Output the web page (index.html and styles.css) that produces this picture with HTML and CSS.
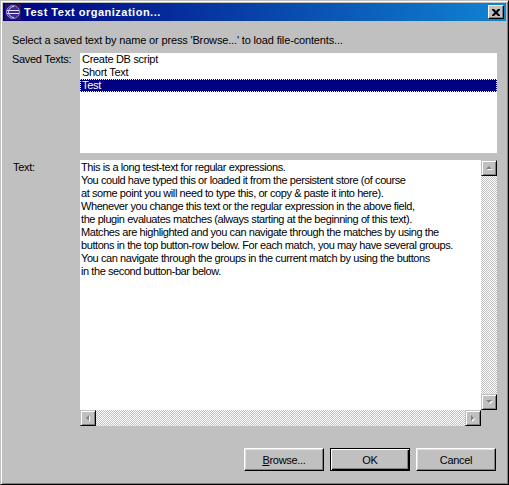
FILE: index.html
```html
<!DOCTYPE html>
<html>
<head>
<meta charset="utf-8">
<link rel="stylesheet" href="styles.css">
</head>
<body>
<div class="window">
  <div class="titlebar">
    <svg class="app-icon" width="16" height="16" viewBox="0 0 16 16">
      <rect x="0" y="0" width="16" height="16" fill="#2a1660"/>
      <circle cx="8" cy="8" r="6.5" fill="#3b2a8a" stroke="#9c8ae0" stroke-width="1"/>
      <rect x="2" y="6" width="12" height="1" fill="#e8e0ff"/>
      <rect x="2" y="9" width="12" height="1" fill="#e8e0ff"/>
      <path d="M9 2.5 A5.5 5.5 0 0 0 9 13.5" fill="none" stroke="#d0c8ff" stroke-width="1"/>
    </svg>
    <span class="title">Test Text organization...</span>
    <button class="close-btn" aria-label="Close">
      <svg width="8" height="7" viewBox="0 0 8 7"><path d="M0 0h2l2 2 2-2h2v1l-2.5 2.5 2.5 2.5v1h-2l-2-2-2 2h-2v-1l2.5-2.5-2.5-2.5z" fill="#000"/></svg>
    </button>
  </div>
  <div class="content">
    <p class="intro">Select a saved text by name or press 'Browse...' to load file-contents...</p>
    <div class="form">
      <label class="label">Saved Texts:</label>
      <ul class="listbox">
        <li>Create DB script</li>
        <li>Short Text</li>
        <li class="selected">Test</li>
      </ul>
      <label class="label label-text">Text:</label>
      <div class="textarea">
        <div class="text-main">
          <div class="text-body">This is a long test-text for regular expressions.
You could have typed this or loaded it from the persistent store (of course
at some point you will need to type this, or copy &amp; paste it into here).
Whenever you change this text or the regular expression in the above field,
the plugin evaluates matches (always starting at the beginning of this text).
Matches are highlighted and you can navigate through the matches by using the
buttons in the top button-row below. For each match, you may have several groups.
You can navigate through the groups in the current match by using the buttons
in the second button-bar below.</div>
          <div class="vscroll">
            <div class="sb-btn">
              <svg width="7" height="5" viewBox="0 0 7 5"><path d="M4 1 L7 4 H1 Z" fill="#fff"/><path d="M3 0 L6 3 H0 Z" fill="#808080"/></svg>
            </div>
            <div class="sb-track"></div>
            <div class="sb-btn">
              <svg width="7" height="5" viewBox="0 0 7 5"><path d="M1 1 H7 L4 4 Z" fill="#fff"/><path d="M0 0 H6 L3 3 Z" fill="#808080"/></svg>
            </div>
          </div>
        </div>
        <div class="hscroll-row">
          <div class="hscroll">
            <div class="sb-btn">
              <svg width="5" height="7" viewBox="0 0 5 7"><path d="M4 1 V7 L1 4 Z" fill="#fff"/><path d="M3 0 V6 L0 3 Z" fill="#808080"/></svg>
            </div>
            <div class="sb-track"></div>
            <div class="sb-btn">
              <svg width="5" height="7" viewBox="0 0 5 7"><path d="M1 1 V7 L4 4 Z" fill="#fff"/><path d="M0 0 V6 L3 3 Z" fill="#808080"/></svg>
            </div>
          </div>
          <div class="sb-corner"></div>
        </div>
      </div>
    </div>
    <div class="buttons">
      <button class="btn"><u>B</u>rowse...</button>
      <button class="btn btn-default">OK</button>
      <button class="btn">Cancel</button>
    </div>
  </div>
</div>
</body>
</html>
```
FILE: styles.css
```css
* { box-sizing: border-box; }
html, body { margin: 0; padding: 0; }
body {
  background: #c0c0c0;
  font-family: "Liberation Sans", Arial, sans-serif;
  font-size: 11px;
  letter-spacing: -0.3px;
  color: #000;
}
.window {
  width: 509px;
  height: 485px;
  background: #c0c0c0;
  border: 1px solid;
  border-color: #c0c0c0 #000 #000 #c0c0c0;
  box-shadow: inset 1px 1px #fff, inset -1px -1px #808080;
  padding: 2px;
  display: flex;
  flex-direction: column;
}
.titlebar {
  height: 18px;
  background: linear-gradient(to right, #000080, #1084d0);
  display: flex;
  align-items: center;
  padding: 0 2px 0 2px;
}
.app-icon { flex: none; margin-right: 3px; }
.title {
  color: #fff;
  font-weight: bold;
  font-size: 11px;
  flex: 1;
  letter-spacing: 0.5px;
}
.close-btn {
  width: 16px;
  height: 14px;
  padding: 0;
  background: #c0c0c0;
  border: 1px solid;
  border-color: #fff #000 #000 #fff;
  box-shadow: inset -1px -1px #808080;
  display: flex;
  align-items: center;
  justify-content: center;
}
.content {
  flex: 1;
  padding: 13px 9px 0 9px;
  display: flex;
  flex-direction: column;
}
.intro {
  margin: 0;
  line-height: 13px;
  height: 13px;
  letter-spacing: -0.15px;
}
.form {
  margin-top: 6px;
  display: grid;
  grid-template-columns: 68px minmax(0, 1fr);
  grid-template-rows: 100px 266px;
  row-gap: 7px;
}
.label {
  line-height: 13px;
}
.label-text { padding-top: 1px; padding-left: 1px; }
.listbox {
  margin: 0;
  padding: 0;
  list-style: none;
  background: #fff;
}
.listbox li {
  height: 13px;
  line-height: 13px;
  padding-left: 2px;
  white-space: nowrap;
}
.listbox li.selected {
  background: #000080;
  color: #fff;
  outline: 1px dotted #ffff90;
  outline-offset: -1px;
}
.textarea {
  display: flex;
  flex-direction: column;
  min-width: 0;
}
.text-main {
  flex: 1;
  display: flex;
  min-height: 0;
}
.text-body {
  flex: 1;
  min-width: 0;
  background: #fff;
  white-space: pre;
  line-height: 13px;
  letter-spacing: -0.42px;
  padding: 1px 0 0 1px;
  overflow: hidden;
}
.vscroll {
  width: 16px;
  flex: none;
  display: flex;
  flex-direction: column;
}
.hscroll-row {
  height: 16px;
  display: flex;
}
.hscroll {
  flex: 1;
  display: flex;
}
.sb-corner { width: 16px; flex: none; background: #c0c0c0; }
.sb-track {
  flex: 1;
  background: repeating-conic-gradient(#c0c0c0 0 25%, #fff 0 50%) 0 0 / 2px 2px;
}
.sb-btn {
  width: 16px;
  height: 16px;
  flex: none;
  background: #c0c0c0;
  border: 1px solid;
  border-color: #c0c0c0 #000 #000 #c0c0c0;
  box-shadow: inset 1px 1px #fff, inset -1px -1px #808080;
  display: flex;
  align-items: center;
  justify-content: center;
}
.buttons {
  margin-top: 22px;
  display: flex;
  justify-content: flex-end;
  gap: 6px;
  padding-right: 1px;
}
.btn {
  width: 80px;
  height: 23px;
  padding: 0;
  background: #c0c0c0;
  font-family: "Liberation Sans", Arial, sans-serif;
  font-size: 11px;
  letter-spacing: -0.3px;
  color: #000;
  border: 1px solid;
  border-color: #fff #000 #000 #fff;
  box-shadow: inset -1px -1px #808080, inset 1px 1px #dfdfdf;
}
.btn-default {
  border: 1px solid #000;
  box-shadow: inset 1px 1px #fff, inset -1px -1px #000, inset -2px -2px #808080;
}
```
